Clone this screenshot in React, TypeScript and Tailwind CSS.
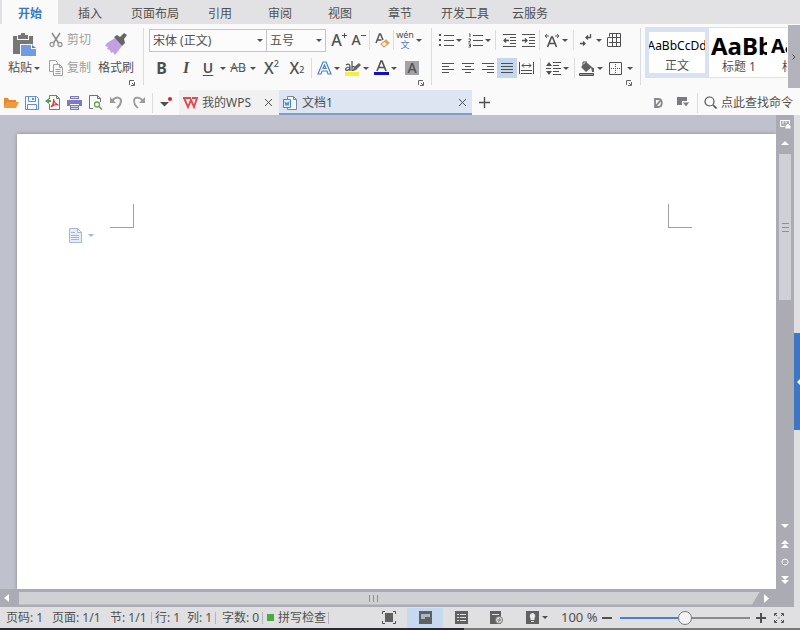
import type { ReactNode } from 'react'

const menuTabs = [
  { name: '插入', width: 'w-[60px]' },
  { name: '页面布局', width: 'w-[70px]' },
  { name: '引用', width: 'w-[60px]' },
  { name: '审阅', width: 'w-[60px]' },
  { name: '视图', width: 'w-[60px]' },
  { name: '章节', width: 'w-[60px]' },
  { name: '开发工具', width: 'w-[70px]' },
  { name: '云服务', width: 'w-[60px]' },
]

function Svg({ w, h, children }: { w: number; h: number; children: ReactNode }) {
  return (
    <svg width={w} height={h} viewBox={`0 0 ${w} ${h}`} fill="none" stroke="currentColor" className="shrink-0" aria-hidden="true">
      {children}
    </svg>
  )
}

function Tool({ label, className = '', children }: { label: string; className?: string; children: ReactNode }) {
  return (
    <button type="button" aria-label={label} title={label} className={`flex h-5 shrink-0 items-center justify-center ${className}`}>
      {children}
    </button>
  )
}

function Triangle() {
  return (
    <Svg w={6} h={3}>
      <path d="M0 0h6L3 3z" fill="currentColor" stroke="none" />
    </Svg>
  )
}

function Drop({ label, className = 'w-[10px]' }: { label: string; className?: string }) {
  return (
    <Tool label={label} className={className}>
      <Triangle />
    </Tool>
  )
}

function Sep({ className = 'mx-1' }: { className?: string }) {
  return <span className={`h-5 w-px shrink-0 bg-[#dcdcde] ${className}`} />
}

function Launcher({ label }: { label: string }) {
  return (
    <button type="button" aria-label={label} className="absolute right-2 bottom-1 text-[#666]">
      <Svg w={6} h={6}>
        <path d="M.5 5V.5H5M5.500 2v3.500H2M3 3l2 2" />
      </Svg>
    </button>
  )
}

// Text lines drawn as [x, y, width] bars
function Lines({ bars }: { bars: number[][] }) {
  return (
    <>
      {bars.map(([x, y, width], i) => (
        <rect key={i} x={x} y={y} width={width} height={1} fill="currentColor" stroke="none" />
      ))}
    </>
  )
}

function ClipboardGroup() {
  return (
    <div className="relative flex w-[143px] shrink-0 pl-1">
      <button type="button" className="flex w-10 flex-col items-center">
        <span className="flex h-8 items-end pb-px">
          <Svg w={26} h={24}>
            <path d="M2 3h20v18H2z" fill="#767676" stroke="none" />
            <path d="M6 3h12v4H6z" fill="#fafafa" stroke="none" />
            <path d="M7 2h3V0h4v2h3v4H7z" fill="#767676" stroke="none" />
            <path d="M9 11h12l5 4v9H9z" fill="#fafafa" stroke="none" />
            <path d="M10 12h10v4h5v7H10z" fill="#739be4" stroke="none" />
            <path d="M21 12v3h4z" fill="#4f7fd4" stroke="none" />
          </Svg>
        </span>
        <span className="flex items-center gap-[2px] text-xs leading-[20px]">
          粘贴
          <Triangle />
        </span>
      </button>
      <div className="flex w-[50px] flex-col text-[#a0a0a0]">
        <button type="button" className="flex h-7 items-center gap-1 pl-[5px] text-xs">
          <Svg w={14} h={16}>
            <path d="M3 1l6.500 10M11 1L4.500 11" strokeWidth="1.500" stroke="#8a8a8a" />
            <circle cx="3" cy="12.500" r="2" strokeWidth="1.300" stroke="#999" />
            <circle cx="11" cy="12.500" r="2" strokeWidth="1.300" stroke="#999" />
          </Svg>
          <span className="whitespace-nowrap">剪切</span>
        </button>
        <button type="button" className="flex h-7 items-center gap-1 pl-[5px] text-xs">
          <Svg w={14} h={16}>
            <path d="M4 11.500H.5V.5h6l2 2V4" />
            <path d="M4.500 4.500h6l3 3v8h-9zM10.500 4.500v3h3M6.500 9.500h5M6.500 11.500h5M6.500 13.500h5" />
          </Svg>
          <span className="whitespace-nowrap">复制</span>
        </button>
      </div>
      <button type="button" className="flex w-11 flex-col items-center">
        <span className="flex h-8 items-end pb-[2px]">
          <Svg w={24} h={24}>
            <path d="M3 11l8-5 7 8-7 9-2-3-2 1-1-3-3-1 1-2-3-1z" fill="#c3a0e6" stroke="none" />
            <path d="M10 5l3-2 3 2 4-4 3 2-3 4 1 4-3 3z" fill="#666" stroke="none" />
          </Svg>
        </span>
        <span className="text-xs leading-[20px] whitespace-nowrap">格式刷</span>
      </button>
      <Launcher label="剪贴板设置" />
    </div>
  )
}

function FontGroup() {
  return (
    <div className="relative w-[288px] shrink-0 pl-[5px]">
      <div className="flex h-7 items-center">
        <div className="relative flex h-[23px] w-[118px] items-center border border-[#c4c4c6] bg-[#fcfcfc]">
          <select aria-label="字体" className="h-full w-full appearance-none pt-px pl-[3px] text-xs outline-none">
            <option>宋体 (正文)</option>
          </select>
          <span className="pointer-events-none absolute right-[3px]"><Triangle /></span>
        </div>
        <div className="relative -ml-px flex h-[23px] w-[60px] items-center border border-[#c4c4c6] bg-[#fcfcfc]">
          <select aria-label="字号" className="h-full w-full appearance-none pt-px pl-[3px] text-xs outline-none">
            <option>五号</option>
          </select>
          <span className="pointer-events-none absolute right-[3px]"><Triangle /></span>
        </div>
        <Tool label="增大字号" className="ml-[3px] w-5">
          <span className="text-base font-medium">A</span>
          <Svg w={5} h={16}><path d="M2.500 1v5M0 3.500h5" /></Svg>
        </Tool>
        <Tool label="减小字号" className="w-[19px]">
          <span className="text-sm font-medium">A</span>
          <Svg w={5} h={16}><path d="M0 3.500h5" /></Svg>
        </Tool>
        <Sep className="mr-1 ml-px" />
        <Tool label="清除格式" className="w-4">
          <Svg w={15} h={16}>
            <path d="M1 11L4.500 2h1L8 8M2.500 8h4" strokeWidth="1.400" />
            <path d="M6 12l5-4 3 3-5 4z" stroke="#dfa35f" strokeWidth="1.300" fill="#fff6ea" />
            <path d="M9 9.500l2-1.500 3 3-2 1.500z" fill="#dfa35f" stroke="none" />
          </Svg>
        </Tool>
        <Sep className="mr-[2px] ml-[3px]" />
        <Tool label="拼音指南" className="w-[18px] flex-col">
          <span className="text-[9px] leading-[9px]">wén</span>
          <span className="text-[9px] leading-[11px] text-[#4a7fc4]">文</span>
        </Tool>
        <Drop label="拼音选项" />
      </div>
      <div className="flex h-7 items-center">
        <Tool label="加粗" className="w-[25px] text-base font-bold">B</Tool>
        <Tool label="倾斜" className="w-6 font-['Liberation_Serif',serif] text-base font-bold italic">I</Tool>
        <Tool label="下划线" className="w-5 text-sm font-semibold underline underline-offset-2">U</Tool>
        <Drop label="下划线样式" />
        <Tool label="删除线" className="w-5 text-xs line-through decoration-[#d0555a]">AB</Tool>
        <Drop label="删除线选项" className="mr-px w-[10px]" />
        <Tool label="上标" className="w-[25px] text-base font-medium">X<sup className="text-[9px]">2</sup></Tool>
        <Tool label="下标" className="w-[26px] text-base font-medium">X<sub className="text-[9px]">2</sub></Tool>
        <Sep className="mr-1 ml-px" />
        <Tool label="文字效果" className="w-4">
          <Svg w={15} h={14}>
            <path d="M1 13L6 1h3l5 12h-3l-1-3H5l-1 3zM6 7.500h3L7.500 4z" stroke="#4d82c4" strokeWidth="1.200" />
          </Svg>
        </Tool>
        <Drop label="文字效果选项" />
        <Tool label="突出显示" className="ml-[2px] w-[17px]">
          <Svg w={16} h={16}>
            <path d="M0 12h14v4H0z" fill="#f5f03c" stroke="none" />
            <path d="M1 5c3-2 4 0 4 2v4M5 7C1 7 0 9 1 10s3 0 4-2M7 1v10M7 7c3-2 4 3 0 3.500" strokeWidth="1.200" />
            <path d="M8 11l1-4 5-4 2 2-5 5z" fill="#666" stroke="none" />
          </Svg>
        </Tool>
        <Drop label="突出显示颜色" className="w-[9px]" />
        <Tool label="字体颜色" className="ml-[3px] w-4">
          <Svg w={15} h={16}>
            <path d="M3 11L7 1h1l4 10M4.500 7.500h6" strokeWidth="1.600" />
            <path d="M0 12h15v3H0z" fill="#1010c8" stroke="none" />
          </Svg>
        </Tool>
        <Drop label="字体颜色选项" />
        <Tool label="字符底纹" className="ml-[5px] w-4">
          <span className="flex size-[14px] items-center justify-center bg-[#a2a3a8] text-sm font-medium">A</span>
        </Tool>
      </div>
      <Launcher label="字体设置" />
    </div>
  )
}

function ParagraphGroup() {
  return (
    <div className="relative w-[208px] shrink-0 pl-[6px]">
      <div className="flex h-7 items-center">
        <Tool label="项目符号" className="w-4">
          <Svg w={15} h={13}>
            <path d="M0 0h2v2H0zM0 5h2v2H0zM0 10h2v2H0z" fill="currentColor" stroke="none" />
            <Lines bars={[[5, 1, 10], [5, 6, 10], [5, 11, 10]]} />
          </Svg>
        </Tool>
        <Drop label="项目符号样式" />
        <Tool label="编号" className="ml-[3px] w-4">
          <Svg w={15} h={15}>
            <path d="M1 1h1v3M.5 6h2v1.500l-2 1.500h2M.5 11h2v3h-2M1 12.500h1.500" />
            <Lines bars={[[5, 2, 10], [5, 7, 10], [5, 12, 10]]} />
          </Svg>
        </Tool>
        <Drop label="编号样式" />
        <Sep className="mr-1 ml-[2px]" />
        <Tool label="减少缩进" className="w-[19px]">
          <Svg w={13} h={13}>
            <Lines bars={[[0, 0, 13], [7, 3, 6], [7, 6, 6], [7, 9, 6], [0, 12, 13]]} />
            <path d="M6 6.500H1M3 4.500l-2 2 2 2" strokeWidth="1.300" />
          </Svg>
        </Tool>
        <Tool label="增加缩进" className="w-[19px]">
          <Svg w={13} h={13}>
            <Lines bars={[[0, 0, 13], [7, 3, 6], [7, 6, 6], [7, 9, 6], [0, 12, 13]]} />
            <path d="M0 6.500h5M3 4.500l2 2-2 2" strokeWidth="1.300" />
          </Svg>
        </Tool>
        <Sep className="mr-1 ml-px" />
        <Tool label="字符缩放" className="w-4">
          <Svg w={16} h={15}>
            <path d="M3.500 14L7.500 4h1l4 10M5 10.500h6" strokeWidth="1.600" />
            <path d="M5 3H1M3 1L1 3l2 2M11 3h4M13 1l2 2-2 2" />
          </Svg>
        </Tool>
        <Drop label="字符缩放选项" />
        <Sep className="mr-1 ml-[3px]" />
        <Tool label="显示段落标记" className="w-4">
          <Svg w={12} h={13}>
            <path d="M10.500 0v3.500H6M8 1.500l-2 2 2 2M0 9.500h5M3 7.500l2 2-2 2" strokeWidth="1.300" />
          </Svg>
        </Tool>
        <Drop label="段落标记选项" />
        <Tool label="插入表格" className="w-5">
          <Svg w={14} h={14}>
            <path d="M2.500.5h11v13h-9M.5 4.500v9M2.500.5v3M1 4.500h12.500M5.500.5v13M9.500.5v13M2 9.500h11.500M1 13.500h4" />
          </Svg>
        </Tool>
      </div>
      <div className="flex h-7 items-center">
        <Tool label="左对齐" className="w-5">
          <Svg w={12} h={10}><Lines bars={[[0, 0, 12], [0, 3, 7], [0, 6, 12], [0, 9, 7]]} /></Svg>
        </Tool>
        <Tool label="居中对齐" className="w-5">
          <Svg w={12} h={10}><Lines bars={[[0, 0, 12], [3, 3, 6], [0, 6, 12], [3, 9, 6]]} /></Svg>
        </Tool>
        <Tool label="右对齐" className="w-[19px]">
          <Svg w={12} h={10}><Lines bars={[[0, 0, 12], [5, 3, 7], [0, 6, 12], [5, 9, 7]]} /></Svg>
        </Tool>
        <Tool label="两端对齐" className="w-5 bg-[#c5d7ee]">
          <Svg w={12} h={10}><Lines bars={[[0, 0, 12], [0, 3, 12], [0, 6, 12], [0, 9, 12]]} /></Svg>
        </Tool>
        <Tool label="分散对齐" className="w-[18px]">
          <Svg w={15} h={12}>
            <path d="M.5 0v12M14.500 0v12M3 3.500h9M5 1.500l-2 2 2 2M10 1.500l2 2-2 2" />
            <Lines bars={[[2, 8, 11], [2, 11, 11]]} />
          </Svg>
        </Tool>
        <Sep className="mr-1 ml-[5px]" />
        <Tool label="行距" className="w-4">
          <Svg w={15} h={13}>
            <path d="M0 4l3-4 3 4zM0 9h6l-3 4z" fill="currentColor" stroke="none" />
            <Lines bars={[[0, 6, 5], [7, 0, 8], [7, 3, 6], [7, 6, 8], [7, 9, 6], [7, 12, 8]]} />
          </Svg>
        </Tool>
        <Drop label="行距选项" />
        <Sep className="mr-[3px] ml-[3px]" />
        <Tool label="底纹颜色" className="w-[17px]">
          <Svg w={16} h={15}>
            <path d="M2 6l5-5 6 5-6 5zM12 6l3 1v4h-2z" fill="#606060" stroke="none" />
            <path d="M4 5V1h4" />
            <path d="M.5 12.500h14v2H.5z" fill="#999" />
          </Svg>
        </Tool>
        <Drop label="底纹颜色选项" />
        <Tool label="边框" className="w-5">
          <Svg w={13} h={13}>
            <path d="M.5.5h12v12H.5z" />
            <path d="M6.500 2v9M2 6.500h9" strokeDasharray="1 1" />
          </Svg>
        </Tool>
        <Drop label="边框选项" className="w-[9px]" />
      </div>
      <Launcher label="段落设置" />
    </div>
  )
}

function StyleGallery() {
  return (
    <div className="flex min-w-0 flex-1 pl-1">
      <div className="mt-px flex h-[51px] min-w-0 flex-1 overflow-hidden border-y border-[#e0e0e2] bg-white">
        <button type="button" className="flex w-16 shrink-0 flex-col items-center overflow-hidden border-4 border-[#d9e2f2]">
          <span className="h-[26px] text-xs leading-[28px] text-black">AaBbCcDd</span>
          <span className="text-xs leading-[16px]">正文</span>
        </button>
        <button type="button" className="flex w-[62px] shrink-0 flex-col items-start overflow-hidden pl-[2px]">
          <span className="h-[31px] w-14 overflow-hidden text-left text-2xl leading-[35px] font-bold text-black">AaBb</span>
          <span className="pl-[11px] text-xs leading-[16px]">标题 1</span>
        </button>
        <button type="button" className="flex w-[62px] shrink-0 flex-col items-start overflow-hidden">
          <span className="h-[31px] w-14 overflow-hidden text-left text-xl leading-[35px] font-bold text-black">AaBb</span>
          <span className="pl-[11px] text-xs leading-[16px]">标题 2</span>
        </button>
      </div>
      <button type="button" aria-label="更多样式" className="-mt-px ml-px flex h-[63px] w-3 shrink-0 items-center justify-center bg-[#b3b4bb]">
        <Svg w={4} h={6}><path d="M.5.5L3 3 .5 5.500" /></Svg>
      </button>
    </div>
  )
}

function QuickBar() {
  return (
    <div className="flex h-[25px] shrink-0 items-center bg-[#fafafa]">
      <Tool label="打开" className="w-[21px]">
        <Svg w={16} h={13}>
          <path d="M1 12V2h4l1 2h7v3H4z" fill="#e58a2b" stroke="none" />
          <path d="M4 6h12l-3 6H1z" fill="#f29a3c" stroke="none" />
        </Svg>
      </Tool>
      <Tool label="保存" className="w-[21px]">
        <Svg w={14} h={14}>
          <path d="M.5.5h11l2 2v11H.5zM3.500.5v5h7v-5M2.500 13.500v-5h9v5" stroke="#5b8edb" />
          <path d="M7 2h2v2H7z" fill="#5b8edb" stroke="none" />
        </Svg>
      </Tool>
      <Tool label="输出为PDF" className="w-[22px]">
        <Svg w={16} h={15}>
          <path d="M4.500 4V.5h7l3 3v11h-10V9M11.500.5v3h3" stroke="#777" />
          <path d="M6 12c3-3 3-5 2.500-8 .5 4 2 5 5 6-3-1-5 0-7.500 2z" stroke="#cf3f45" strokeWidth="1.300" />
          <path d="M0 6l4-3v2h2v2H4v2z" fill="#5a9c50" stroke="none" />
        </Svg>
      </Tool>
      <Tool label="打印" className="w-[21px]">
        <Svg w={15} h={14}>
          <path d="M3 0h9v3H3zM0 4h15v6h-3V8H3v2H0zM3 9h9v5H3z" fill="#7c7bc0" stroke="none" />
          <path d="M4 10.500h7M4 12.500h7M4 1.500h7" stroke="#d4d4ec" />
        </Svg>
      </Tool>
      <Tool label="打印预览" className="w-[21px]">
        <Svg w={14} h={15}>
          <path d="M4 13.500H.5V.5h8l3 3V7M8.500.5v3h3" stroke="#707070" />
          <circle cx="8" cy="9.500" r="2.500" stroke="#69a258" strokeWidth="1.300" />
          <path d="M10 11.500l3 3" stroke="#69a258" strokeWidth="1.600" />
        </Svg>
      </Tool>
      <Tool label="撤销" className="w-[21px] text-[#9a9a9a]">
        <Svg w={13} h={13}>
          <path d="M2 5c4-5 9-4 9 0s-2 5-4 7" strokeWidth="2" />
          <path d="M0 1v6h6z" fill="currentColor" stroke="none" />
        </Svg>
      </Tool>
      <Tool label="恢复" className="w-[22px] text-[#9a9a9a]">
        <Svg w={13} h={13}>
          <path d="M11 5C7 0 2 1 2 5s2 5 4 7" strokeWidth="1.700" />
          <path d="M13 1v6H7z" fill="currentColor" stroke="none" />
        </Svg>
      </Tool>
      <Sep className="mr-[2px] ml-[3px]" />
      <Tool label="自定义快速访问" className="mr-[2px] w-[22px]">
        <Svg w={12} h={12}>
          <path d="M0 5h9L4.500 9.500z" fill="currentColor" stroke="none" />
          <circle cx="10" cy="2" r="2" fill="#d0252b" stroke="none" />
        </Svg>
      </Tool>
      <div className="flex h-full w-[100px] shrink-0 items-center bg-[#f1f1f2] pr-[6px] pl-1">
        <button type="button" className="flex flex-1 items-center gap-1 text-xs whitespace-nowrap">
          <Svg w={15} h={12}>
            <path d="M0 1h8M1 1l4 9 3-7 3 7 3-9H9" stroke="#df4b50" strokeWidth="1.900" />
          </Svg>
          我的WPS
        </button>
        <CloseButton label="关闭我的WPS" />
      </div>
      <div className="flex h-full w-[193px] shrink items-center border-b-2 border-[#7f9fc8] bg-[#dce5f1] pt-[2px] pr-[5px] pl-1">
        <button type="button" className="flex flex-1 items-center gap-[5px] text-xs whitespace-nowrap">
          <Svg w={14} h={14}>
            <path d="M4.500 3V.5h6l3 3v10h-9V12M10.500.5v3h3" stroke="#7b8794" fill="#f6f9fc" />
            <path d="M.5 3.500h7v8h-7z" stroke="#3e87c8" fill="#e8f2fb" />
            <path d="M2 5.500l1 4 1-3 1 3 1-4" stroke="#3e87c8" />
          </Svg>
          文档1
        </button>
        <CloseButton label="关闭文档1" />
      </div>
      <Tool label="新建" className="w-[25px]">
        <Svg w={11} h={11}><path d="M5.500 0v11M0 5.500h11" strokeWidth="1.400" /></Svg>
      </Tool>
      <div className="ml-auto flex items-center">
        <Tool label="文档漫游" className="w-5 text-[#85868c]">
          <Svg w={9} h={10}>
            <path d="M1 1h3c5 0 5 8 0 8H1zM2 8l4-5" strokeWidth="1.800" />
          </Svg>
        </Tool>
        <Tool label="皮肤" className="ml-[3px] w-6 text-[#7a7b80]">
          <Svg w={13} h={11}>
            <path d="M0 0h10v4H5v4H0z" fill="currentColor" stroke="none" />
            <path d="M5 5h8L9 10z" fill="currentColor" stroke="#fafafa" />
          </Svg>
        </Tool>
        <Sep className="mr-[6px] ml-px" />
        <button type="button" className="flex items-center gap-1 pr-[7px] text-xs whitespace-nowrap">
          <Svg w={13} h={13}>
            <circle cx="5.500" cy="5.500" r="4.500" strokeWidth="1.200" />
            <path d="M9 9l3.500 3.500" strokeWidth="1.600" />
          </Svg>
          点此查找命令
        </button>
      </div>
    </div>
  )
}

function CloseButton({ label }: { label: string }) {
  return (
    <button type="button" aria-label={label} className="flex size-[10px] items-center justify-center">
      <Svg w={7} h={7}><path d="M0 0l7 7M7 0L0 7" /></Svg>
    </button>
  )
}

function VerticalScroll() {
  return (
    <div className="flex w-[18px] shrink-0 flex-col items-center bg-[#aaabb3] text-white">
      <Tool label="拆分窗口" className="h-[18px]! w-full">
        <Svg w={11} h={11}>
          <path d="M.5 1.500h9v6h-9zM3 1v4M6 1v3" />
          <path d="M5 7l3-3 3 3v3H5z" fill="currentColor" stroke="#aaabb3" />
        </Svg>
      </Tool>
      <Tool label="向上滚动" className="h-[21px]! w-full pb-[2px]">
        <Svg w={8} h={4}><path d="M0 4l4-4 4 4z" fill="currentColor" stroke="none" /></Svg>
      </Tool>
      <div className="flex h-[146px] w-3 flex-col items-center justify-center gap-[3px] bg-[#d0d1d6]">
        <span className="h-px w-[7px] bg-[#8e8f96]" />
        <span className="h-px w-[7px] bg-[#8e8f96]" />
        <span className="h-px w-[7px] bg-[#8e8f96]" />
      </div>
      <div className="mt-auto flex flex-col items-center">
        <Tool label="向下滚动" className="h-[18px]! w-full">
          <Svg w={8} h={4}><path d="M0 0h8L4 4z" fill="currentColor" stroke="none" /></Svg>
        </Tool>
        <Tool label="上一页" className="h-[18px]! w-full">
          <Svg w={8} h={8}><path d="M0 4l4-4 4 4zM0 8l4-4 4 4z" fill="currentColor" stroke="none" /></Svg>
        </Tool>
        <Tool label="选择浏览对象" className="h-[18px]! w-full">
          <Svg w={8} h={8}><circle cx="4" cy="4" r="3" /></Svg>
        </Tool>
        <Tool label="下一页" className="h-[18px]! w-full">
          <Svg w={8} h={8}><path d="M0 0h8L4 4zM0 4h8L4 8z" fill="currentColor" stroke="none" /></Svg>
        </Tool>
      </div>
    </div>
  )
}

function HorizontalScroll() {
  return (
    <div className="flex h-[18px] shrink-0 items-center bg-[#aaabb3] text-white">
      <Tool label="向左滚动" className="w-[19px] pr-[6px]">
        <Svg w={5} h={8}><path d="M5 0v8L0 4z" fill="currentColor" stroke="none" /></Svg>
      </Tool>
      <div className="flex h-[13px] flex-1 items-center justify-center gap-[3px] bg-[#d0d1d4] pr-8 [clip-path:polygon(0_0,100%_0,calc(100%-8px)_100%,0_100%)]">
        <span className="h-[7px] w-px bg-[#8e8f96]" />
        <span className="h-[7px] w-px bg-[#8e8f96]" />
        <span className="h-[7px] w-px bg-[#8e8f96]" />
      </div>
      <Tool label="向右滚动" className="w-[34px] pr-[22px]">
        <Svg w={5} h={9}><path d="M0 0v9l5-4.500z" fill="currentColor" stroke="none" /></Svg>
      </Tool>
    </div>
  )
}

function StatusBar() {
  return (
    <div className="flex h-[21px] shrink-0 items-center bg-[#e0e0e2] text-xs whitespace-nowrap">
      <span className="w-[46px] pl-[6px]">页码: 1</span>
      <span className="ml-[6px] w-[58px]">页面: 1/1</span>
      <span className="w-[41px]">节: 1/1</span>
      <span className="w-9 border-l border-[#b5b5b8] pl-[3px] leading-3">行: 1</span>
      <span className="w-7 leading-3">列: 1</span>
      <span className="w-[47px] border-l border-[#b5b5b8] pl-[6px] leading-3">字数: 0</span>
      <button type="button" className="flex w-[67px] items-center gap-1 border-x border-[#b5b5b8] pl-1 leading-3">
        <span className="size-[7px] bg-[#4ea83d]" />
        拼写检查
      </button>
      <div className="ml-auto flex items-center">
        <Tool label="全屏显示" className="w-9">
          <Svg w={14} h={13}>
            <path d="M3 2h8v9H3z" fill="#606060" stroke="none" />
            <path d="M.5 3V.5H3M11 .5h2.500V3M.5 10v2.500H3M11 12.500h2.500V10" />
          </Svg>
        </Tool>
        <Tool label="页面视图" className="w-9 bg-[#c6d9f1]">
          <Svg w={13} h={13}>
            <path d="M0 0h13v13H0z" fill="#606060" stroke="none" />
            <path d="M2 3h9v3H6v2H2z" fill="#aab6c6" stroke="none" />
          </Svg>
        </Tool>
        <Tool label="大纲视图" className="w-9">
          <Svg w={13} h={13}>
            <path d="M0 0h13v13H0z" fill="#606060" stroke="none" />
            <path d="M2 3.500h2M5 3.500h6M2 6.500h2M5 6.500h6M2 9.500h2M5 9.500h6" stroke="#e0e0e2" />
          </Svg>
        </Tool>
        <Tool label="Web版式视图" className="w-[35px]">
          <Svg w={13} h={13}>
            <path d="M0 0h11v13H0z" fill="#606060" stroke="none" />
            <path d="M2 3.500h7" stroke="#e0e0e2" />
            <circle cx="9" cy="9" r="3.500" fill="#e0e0e2" stroke="#777" />
            <path d="M7 9h4M9 7c2 2 1 3-1 4" stroke="#777" />
          </Svg>
        </Tool>
        <Tool label="护眼模式" className="ml-[10px] w-4">
          <Svg w={13} h={13}>
            <path d="M0 0h13v13H0z" fill="#606060" stroke="none" />
            <path d="M6.500 2a3 3 0 0 1 2 5v2h-4V7a3 3 0 0 1 2-5zM5 10h3v1H5z" fill="#e8e8ea" stroke="none" />
          </Svg>
        </Tool>
        <Drop label="护眼模式选项" />
        <span className="ml-[11px] w-10 text-[13px]">100 %</span>
        <Tool label="缩小" className="ml-px w-[10px]">
          <Svg w={10} h={2}><path d="M0 1h10" strokeWidth="2" /></Svg>
        </Tool>
        <input
          type="range"
          aria-label="显示比例"
          defaultValue={50}
          className="mr-[6px] ml-2 h-4 w-[130px] appearance-none bg-transparent outline-none [&::-webkit-slider-runnable-track]:h-[2px] [&::-webkit-slider-runnable-track]:bg-[linear-gradient(to_right,#4a7fd0_50%,#8a8a8c_50%)] [&::-webkit-slider-thumb]:-mt-[6px] [&::-webkit-slider-thumb]:size-[14px] [&::-webkit-slider-thumb]:appearance-none [&::-webkit-slider-thumb]:rounded-full [&::-webkit-slider-thumb]:border [&::-webkit-slider-thumb]:border-[#77787c] [&::-webkit-slider-thumb]:bg-[#f4f4f5]"
        />
        <Tool label="放大" className="w-[10px]">
          <Svg w={10} h={10}><path d="M0 5h10M5 0v10" strokeWidth="2" /></Svg>
        </Tool>
        <Tool label="最佳显示比例" className="mr-2 w-[26px]">
          <Svg w={10} h={10}>
            <path d="M.5 3V.5H3M7 .5h2.500V3M.5 7v2.500H3M7 9.500h2.500V7M1 1l2 2M9 1L7 3M1 9l2-2M9 9L7 7M4.500 5h1" />
          </Svg>
        </Tool>
      </div>
    </div>
  )
}

export default function App() {
  return (
    <div className="flex h-screen flex-col overflow-hidden bg-[#e2e2e4] font-['Noto_Sans','Noto_Sans_CJK_SC',sans-serif] text-[#505050]">
      <nav className="flex h-6 shrink-0 pl-[2px] text-xs">
        <button type="button" className="mr-[2px] w-14 bg-[#fafafa] pt-[3px] font-bold text-[#3b78bd]">开始</button>
        {menuTabs.map((tab) => (
          <button key={tab.name} type="button" className={`shrink-0 pt-[3px] ${tab.width}`}>
            {tab.name}
          </button>
        ))}
      </nav>

      <div className="flex h-[66px] shrink-0 bg-[#fafafa] pt-[2px]">
        <ClipboardGroup />
        <span className="mt-[2px] h-[57px] w-px shrink-0 bg-[#dcdcde]" />
        <FontGroup />
        <span className="-ml-px mt-[2px] h-[57px] w-px shrink-0 bg-[#dcdcde]" />
        <ParagraphGroup />
        <span className="mt-[2px] h-[57px] w-px shrink-0 bg-[#dcdcde]" />
        <StyleGallery />
      </div>

      <QuickBar />

      <div className="flex min-h-0 flex-1">
        <div className="flex min-w-0 flex-1 flex-col">
          <div className="flex min-h-0 flex-1">
            <main className="flex min-w-0 flex-1 bg-[#bfc1cc] pt-[19px] pl-[17px]">
              <div className="flex-1 bg-white pt-[70px] shadow-[0_0_4px_#85868f]">
                <div className="flex justify-between pr-[84px] pl-[93px]">
                  <span className="size-6 border-r border-b border-[#a0a0a0]" />
                  <span className="size-6 border-b border-l border-[#a0a0a0]" />
                </div>
                <button type="button" aria-label="段落布局" className="ml-[52px] flex items-center gap-[6px] text-[#a3b9d8]">
                  <Svg w={13} h={15}>
                    <path d="M.5.5h8l4 4v10H.5zM8.500.5v4h4M2 4.500h4M2 7.500h8M2 9.500h8M2 11.500h8" fill="#e4edf8" />
                  </Svg>
                  <Triangle />
                </button>
              </div>
            </main>
            <VerticalScroll />
          </div>
          <HorizontalScroll />
        </div>
        <aside className="flex w-[6px] shrink-0 flex-col bg-[#dfdfe1]">
          <div className="flex-[218]" />
          <button type="button" aria-label="展开任务窗格" className="flex h-[97px] items-center justify-end bg-[#3e76c6] text-white">
            <Svg w={3} h={6}><path d="M3 0v6L0 3z" fill="currentColor" stroke="none" /></Svg>
          </button>
          <div className="flex-[177]" />
        </aside>
      </div>

      <StatusBar />
      <div className="h-[2px] shrink-0 bg-[linear-gradient(to_right,#2d2830_58%,#77787a_58%)]" />
    </div>
  )
}
